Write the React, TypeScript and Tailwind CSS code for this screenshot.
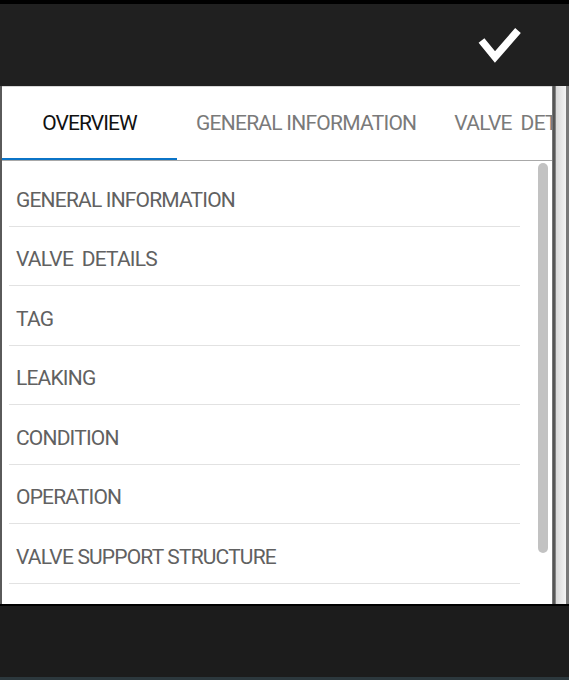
import React from "react";

const items = [
  "GENERAL INFORMATION",
  "VALVE  DETAILS",
  "TAG",
  "LEAKING",
  "CONDITION",
  "OPERATION",
  "VALVE SUPPORT STRUCTURE",
  "",
];

export default function App() {
  return (
    <div
      className="w-[569px] h-[680px] bg-[#1d1d1d] flex flex-col overflow-hidden"
      style={{ fontFamily: "Roboto, 'Liberation Sans', sans-serif" }}
    >
      <div className="h-[4px] bg-black" />
      <header className="h-[82px] bg-[#202020] flex items-center justify-end pr-[45px]">
        <svg width="50" height="40" viewBox="0 0 50 40">
          <path
            d="M7.5 15.5 L21 32 L44 5.5"
            fill="none"
            stroke="#fff"
            strokeWidth="7.5"
            strokeLinecap="butt"
            strokeLinejoin="miter"
          />
        </svg>
      </header>
      <div className="flex h-[518px]">
        <div className="w-[2px] bg-[#5a5a5a]" />
        <main className="w-[550px] bg-white flex flex-col border-t border-[#d8d8d8]">
          <div className="h-[74px] flex border-b border-[#a8a8a8] overflow-hidden whitespace-pre shrink-0">
            <div className="relative w-[175px] shrink-0 flex items-center justify-center text-[21px] tracking-[-0.9px] text-[#111]">
              OVERVIEW
              <div className="absolute left-0 right-0 bottom-[-1px] h-[3px] bg-[#0b74c7]" />
            </div>
            <div className="shrink-0 flex items-center px-[19px] text-[21px] tracking-[-0.75px] text-[#7a7a7a]">
              GENERAL INFORMATION
            </div>
            <div className="shrink-0 flex items-center px-[19px] text-[21px] tracking-[-0.75px] text-[#7a7a7a]">
              VALVE  DETAILS
            </div>
          </div>
          <div className="flex-1 flex relative overflow-hidden">
            <div className="flex-1 pt-[6px] pl-[7px] pr-[32px]">
              {items.map((t, i) => (
                <div
                  key={i}
                  className="h-[59.5px] border-b border-[#e2e2e2] flex items-center pt-[8px] pl-[7px] text-[21px] tracking-[-0.82px] text-[#616161] whitespace-pre"
                >
                  {t}
                </div>
              ))}
            </div>
            <div className="absolute right-[4px] top-[2px] w-[10px] h-[390px] rounded-full bg-[#c2c2c2]" />
          </div>
        </main>
        <div className="w-[4px] bg-gradient-to-r from-[#888] via-[#444] to-[#999]" />
        <div className="w-[10px] bg-gradient-to-r from-[#d8d8d8] to-[#f4f4f4]" />
        <div className="w-[3px] bg-[#7a7a7a]" />
      </div>
      <div className="h-[2px] bg-black" />
      <div className="flex-1 bg-[#1c1c1c]" />
      <div className="h-[3px] bg-[#2c383d]" />
    </div>
  );
}
